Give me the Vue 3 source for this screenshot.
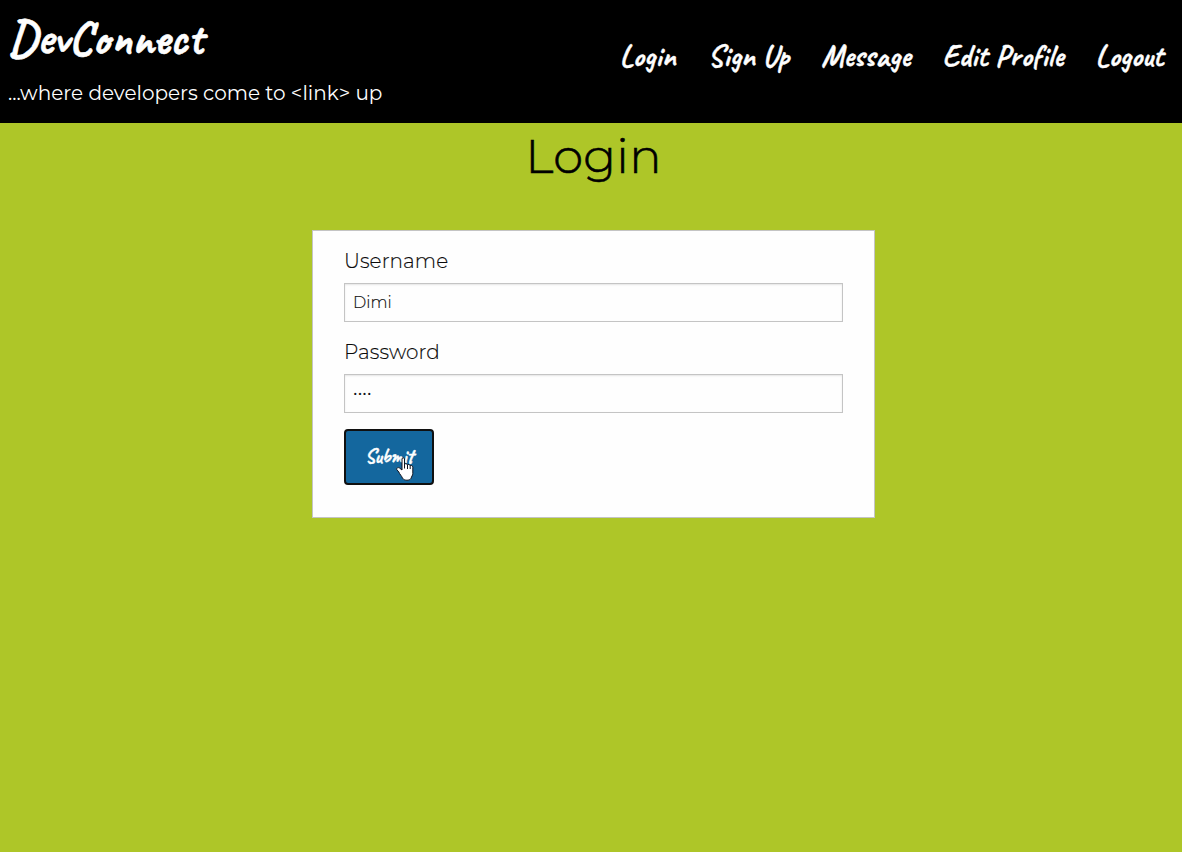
<script setup>
import { ref } from 'vue'

const links = ['Login', 'Sign Up', 'Message', 'Edit Profile', 'Logout']
const username = ref('Dimi')
const password = ref('link')
</script>

<template>
  <div class="page">
    <header class="topbar">
      <div class="brand">
        <h1>DevConnect</h1>
        <p>...where developers come to &lt;link&gt; up</p>
      </div>
      <nav>
        <a v-for="label in links" :key="label">{{ label }}</a>
      </nav>
    </header>
    <main>
      <h2>Login</h2>
      <form class="card" @submit.prevent>
        <label for="username">Username</label>
        <input id="username" v-model="username" type="text" autocomplete="off" />
        <label for="password">Password</label>
        <input id="password" v-model="password" type="password" autocomplete="off" />
        <button type="submit">
          Submit
          <svg class="pointer" width="18" height="24" viewBox="0 0 18 24">
            <path
              d="M6 2C6 .4 8.500 .4 8.500 2V7c.8-.6 2.600-.3 2.800.7.8-.6 2.500-.2 2.700.9 1-.5 2.800 0 2.800 1.600v6.300c0 2-1.600 3.200-1.600 4.700-1.700 2.700-6.700 2.700-8.700 0C6 19.300 3.500 17 2.800 15L.8 12.600c-.6-1.500 1.200-2.600 2.700-1.600L6 13Z"
              fill="#fff" stroke="#10131f" stroke-width="1"
            />
            <path d="M8.500 7v4.500M11.500 8V12M14.200 9V12" stroke="#10131f" fill="none" />
          </svg>
        </button>
      </form>
    </main>
  </div>
</template>

<style>
body {
  margin: 0;
  background: #aec628;
}
</style>

<style scoped>
.page {
  min-height: 852px;
  box-sizing: border-box;
  background: #aec628;
  color: #0a0a0a;
  font-family: Montserrat, Inter, sans-serif;
  font-weight: 300;
}
.topbar {
  display: flex;
  justify-content: space-between;
  height: 123px;
  background: #000;
  color: #fefefe;
}
.brand {
  padding-left: 8px;
}
h1,
nav,
button {
  font-family: Caveat, Lato, cursive;
  font-weight: 700;
  -webkit-text-stroke: 0.4px currentColor;
}
h1 {
  margin: 0;
  height: 78px;
  font-size: 48px;
  line-height: 77px;
  white-space: nowrap;
  -webkit-text-stroke-width: 0.6px;
}
.brand p {
  margin: 0;
  font-size: 20px;
  font-weight: 400;
  line-height: 30px;
  letter-spacing: 0.01px;
  white-space: nowrap;
}
nav {
  display: flex;
  gap: 32px;
  padding: 35px 18.5px 0 0;
  font-size: 30px;
  line-height: 42px;
  letter-spacing: 0.3px;
  white-space: nowrap;
}
main {
  display: flex;
  flex-direction: column;
  align-items: center;
  padding-left: 5px;
}
h2 {
  margin: 0;
  color: #000;
  font-size: 48px;
  font-weight: 300;
  line-height: 66px;
  letter-spacing: 0.3px;
  -webkit-text-stroke: 0.6px currentColor;
}
.card {
  display: flex;
  flex-direction: column;
  width: 563px;
  height: 288px;
  box-sizing: border-box;
  margin-top: 41px;
  padding: 12px 31px;
  border: 1px solid #c4c4c4;
  background: #fefefe;
}
label {
  font-size: 20px;
  line-height: 36px;
  letter-spacing: 0.1px;
  margin-bottom: 4px;
  -webkit-text-stroke: 0.15px currentColor;
}
input {
  width: 100%;
  height: 39px;
  box-sizing: border-box;
  margin: 0 0 12px;
  padding: 8px;
  border: 1px solid #c4c4c4;
  border-radius: 0;
  background: #fefefe;
  box-shadow: inset 0 1px 2px rgba(10, 10, 10, 0.1);
  color: #0a0a0a;
  font: 300 16px Montserrat, Inter, sans-serif;
  outline: none;
  -webkit-text-stroke: 0.15px currentColor;
}
#password {
  letter-spacing: 0.15px;
}
button {
  position: relative;
  width: 90px;
  height: 56px;
  margin-top: 4px;
  padding: 0 0 1px 19px;
  border: 2px solid #101010;
  border-radius: 4px;
  background: #14679e;
  color: #fefefe;
  font-size: 20px;
  text-align: left;
}
.pointer {
  position: absolute;
  left: 50px;
  top: 26px;
}
</style>
